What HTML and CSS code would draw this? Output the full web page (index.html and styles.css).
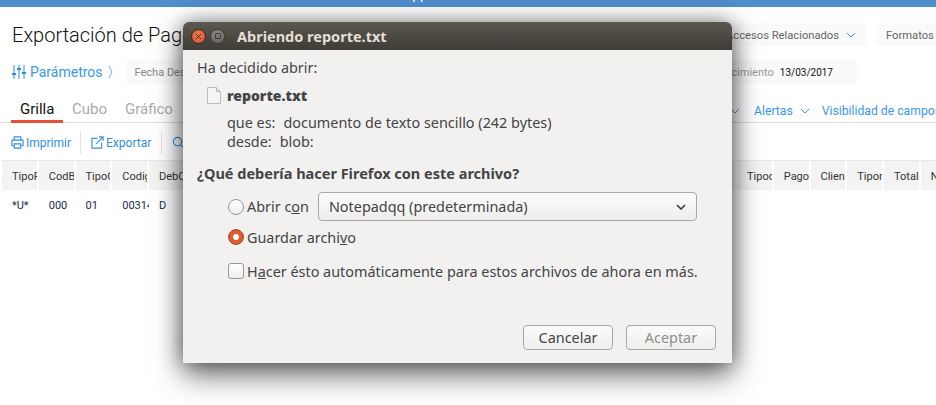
FILE: index.html
```html
<!DOCTYPE html>
<html lang="es">
<head>
<meta charset="utf-8">
<title>Exportación de Pagos</title>
<link rel="stylesheet" href="styles.css">
</head>
<body>
<div class="topbar"><span class="topbar-text">pp</span></div>
<main class="page">
  <header class="head">
    <h1 class="title">Exportación de Pagos</h1>
    <div class="head-actions">
      <span class="pill">Accesos Relacionados <svg class="chev" viewBox="0 0 10 6"><path d="M1 1l4 4 4-4"/></svg></span>
      <span class="pill pill-cut">Formatos</span>
    </div>
  </header>
  <section class="params">
    <svg class="sliders" viewBox="0 0 14 14"><path d="M2 0v14M7 0v14M12 0v14"/><path class="knob" d="M0 9h4M5 4h4M10 8h4"/></svg>
    <span class="params-link">Parámetros</span>
    <svg class="caret" viewBox="0 0 5 14"><path d="M1 1l3 6-3 6"/></svg>
    <span class="field">Fecha Desde</span>
    <span class="field field-right"><span class="field-label">Vencimiento</span><span class="field-value">13/03/2017</span></span>
  </section>
  <nav class="tabs">
    <span class="tab tab-active">Grilla</span>
    <span class="tab">Cubo</span>
    <span class="tab">Gráfico</span>
    <span class="tab-links">
      <svg class="chev chev-lone" viewBox="0 0 10 6"><path d="M1 1l4 4 4-4"/></svg>
      <span class="tab-link">Alertas <svg class="chev" viewBox="0 0 10 6"><path d="M1 1l4 4 4-4"/></svg></span>
      <span class="tab-link">Visibilidad de campos</span>
    </span>
  </nav>
  <div class="toolbar">
    <span class="tool tool-print">
      <svg class="ico" viewBox="0 0 14 14"><path d="M3.500 4V1h7v3M3.500 10.500H1V4.500h12v6h-2.500M3.500 8.500h7v4.500h-7z"/></svg>Imprimir
    </span>
    <span class="tool tool-export">
      <svg class="ico" viewBox="0 0 14 14"><path d="M7 2.500H1v10.500h10.500V7M5.500 8.500L13 1M8.500 1H13v4.500"/></svg>Exportar
    </span>
    <span class="tool tool-search">
      <svg class="ico" viewBox="0 0 14 14"><circle cx="6" cy="6" r="4.500"/><path d="M9.500 9.500L13 13"/></svg>Buscar
    </span>
  </div>
  <div class="grid grid-head">
    <span>TipoFila</span><span>CodBanco</span><span>TipoOp</span><span>Codigo</span><span>DebCred</span>
    <span>Fecha</span><span>Cuenta</span><span>Moneda</span><span>Banco</span><span>Tipo</span>
    <span>Numero</span><span>Serie</span><span>Importe</span><span>Neto</span><span>Dias</span>
    <span>Ref</span><span>Nota</span><span>Doc</span><span>Conc</span><span>Nc</span>
    <span>Tipodoc</span><span>Pago</span><span>Cliente</span><span>Tiporef</span><span>Total</span><span>Nombre</span>
  </div>
  <div class="grid grid-row">
    <span>*U*</span><span>000</span><span>01</span><span>00314</span><span>D</span>
  </div>
</main>

<div class="dialog">
  <div class="dlg-title">
    <span class="win-btn win-close"><svg viewBox="0 0 7 7"><path d="M1 1l5 5M6 1l-5 5"/></svg></span>
    <span class="win-btn win-min"><span class="win-square"></span></span>
    <span class="dlg-title-text">Abriendo reporte.txt</span>
  </div>
  <div class="dlg-body">
    <p class="line">Ha decidido abrir:</p>
    <div class="file">
      <svg class="file-ico" viewBox="0 0 14 17"><path d="M.5.500h9l4 4v12H.500z"/><path class="fold" d="M9.500.500v4h4"/></svg>
      <strong>reporte.txt</strong>
    </div>
    <p class="meta meta-first">que es:<span class="meta-v">documento de texto sencillo (242 bytes)</span></p>
    <p class="meta">desde:<span class="meta-v">blob:</span></p>
    <p class="question">¿Qué debería hacer Firefox con este archivo?</p>
    <div class="opt opt-open">
      <span class="radio"></span>
      <span class="opt-label">Abrir c<u>o</u>n</span>
      <span class="select">Notepadqq (predeterminada)<svg class="sel-chev" viewBox="0 0 10 6"><path d="M1 1l4 4 4-4"/></svg></span>
    </div>
    <div class="opt opt-save">
      <span class="radio radio-on"></span>
      <span class="opt-label">Guardar archi<u>v</u>o</span>
    </div>
    <div class="opt opt-auto">
      <span class="check"></span>
      <span class="opt-label">H<u>a</u>cer ésto automáticamente para estos archivos de ahora en más.</span>
    </div>
    <div class="buttons">
      <span class="btn">Cancelar</span>
      <span class="btn btn-off">Aceptar</span>
    </div>
  </div>
</div>
</body>
</html>
```
FILE: styles.css
```css
* { box-sizing: border-box; }
html, body { margin: 0; height: 405px; overflow: hidden; background: #fff; }
body { font-family: Roboto, "Liberation Sans", sans-serif; color: #222; }
svg { display: block; }
p { margin: 0; }

.topbar { display: flex; justify-content: center; height: 7px; overflow: hidden; background: #4f8ecb; }
.topbar-text { margin: -14px 0 0 -96px; font-size: 14px; line-height: 16px; color: #fff; }
.page { padding-top: 16px; }

.head { display: flex; justify-content: space-between; align-items: center; height: 23px; padding-left: 12px; }
.title { margin: 0; font-size: 20px; font-weight: 300; color: #111; white-space: nowrap; }
.head-actions { display: flex; gap: 10px; margin-right: -18px; }
.pill { display: flex; align-items: center; gap: 7px; height: 23px; padding: 1px 10px 0; background: #fafafa; border-radius: 4px; font-size: 11.200px; color: #666; white-space: nowrap; }
.pill-cut { width: 78px; }
.chev { width: 10px; height: 6px; fill: none; stroke: #4a90d0; stroke-width: 1; }

.params { display: flex; align-items: center; height: 24px; margin-top: 14px; padding-left: 12px; }
.sliders { width: 14px; height: 14px; fill: none; stroke: #2d8ee0; stroke-width: 1; }
.sliders .knob { stroke-width: 2; }
.params-link { margin-left: 4px; font-size: 14px; color: #3a97ee; }
.caret { width: 5px; height: 14px; margin-left: 5px; fill: none; stroke: #3a97ee; stroke-width: .8; }
.field { display: flex; align-items: center; height: 24px; margin-left: 12px; padding: 1px 0 0 10px; width: 180px; background: #fafafa; border-radius: 4px; font-size: 11px; color: #888; }
.field-right { margin-left: auto; margin-right: 79px; width: 190px; justify-content: flex-end; padding-right: 24px; }
.field-label { color: #999; font-size: 11px; }
.field-value { margin-left: 6px; color: #111; font-size: 10px; }

.tabs { display: flex; align-items: stretch; height: 29px; margin: 10px 0 0 1px; padding-left: 10px; border-bottom: 1px solid #ddd; font-size: 15px; }
.tab { padding: 6px 9px 0; color: #aaa; }
.tab-active { color: #111; border-bottom: 3px solid #e8503a; height: 29px; width: 52px; }
.tab-links { display: flex; align-items: center; gap: 12px; margin-left: auto; padding-top: 6px; font-size: 12.200px; color: #3a97ee; white-space: nowrap; margin-right: -5px; }
.tab-link { display: flex; align-items: center; gap: 7px; }
.chev-lone { margin-right: 2px; }

.toolbar { display: flex; align-items: center; height: 25px; margin-top: 7px; font-size: 12px; color: #2f8fe6; }
.tool { display: flex; align-items: center; gap: 2px; height: 23px; white-space: nowrap; }
.ico { width: 13px; height: 13px; fill: none; stroke: #2f8fe6; stroke-width: 1.200; }
.tool-print { padding: 0 9px 0 11px; border-right: 1px solid #e3e3e3; }
.tool-export { padding: 0 10px 0 10px; border-right: 1px solid #e3e3e3; }
.tool-search { padding-left: 10px; }

.grid { display: grid; grid-template-columns: repeat(26, 36.750px); margin-left: 2px; font-size: 11px; }
.grid span { overflow: hidden; white-space: nowrap; padding-left: 10px; }
.grid-head { height: 30px; margin-top: 5px; background: #f3f3f3; border-top: 1px solid #e8e8e8; color: #333; }
.grid-head span { line-height: 31px; border-right: 2px solid #fff; }
.grid-row { height: 30px; line-height: 32px; color: #1a2a50; }

.dialog { position: absolute; left: 183px; top: 22px; width: 549px; height: 341px; border-radius: 6px 6px 0 0; box-shadow: 0 0 20px rgba(0,0,0,.4), 0 12px 30px rgba(0,0,0,.55); font-family: "Noto Sans", "DejaVu Sans", sans-serif; font-size: 14.400px; color: #444; }
.dlg-title { display: flex; align-items: center; height: 28px; padding-left: 8px; border-radius: 6px 6px 0 0; background: linear-gradient(#5b584f, #3e3c36); }
.win-btn { display: flex; align-items: center; justify-content: center; width: 15px; height: 15px; border-radius: 50%; }
.win-close { background: radial-gradient(circle at 50% 35%, #ef7b4e, #d2512a); border: 1px solid #3a2a20; }
.win-close svg { width: 7px; height: 7px; fill: none; stroke: #4a2412; stroke-width: 1; }
.win-min { margin-left: 4px; background: linear-gradient(#8a877e, #6a675f); border: 1px solid #3a3934; }
.win-square { width: 6px; height: 6px; border: 1px solid #3a3934; border-radius: 1px; }
.dlg-title-text { margin-left: 12px; font-size: 14.500px; font-weight: 700; color: #e2dfd8; white-space: nowrap; }

.dlg-body { height: 313px; padding: 8px 14px 0; background: #f2f1f0; }
.line { line-height: 20px; }
.file { display: flex; align-items: center; height: 20px; margin: 7px 0 0 10px; gap: 6px; font-size: 14px; font-weight: 700; }
.file-ico { width: 14px; height: 17px; fill: #f4f4f2; stroke: #bdbcb8; stroke-width: 1; }
.file-ico .fold { fill: #dcdbd8; }
.meta { padding-left: 30px; line-height: 19px; }
.meta-first { margin-top: 8px; }
.meta-v { margin-left: 8px; }
.question { margin-top: 12px; line-height: 20px; font-size: 14.500px; font-weight: 700; }

.opt { display: flex; align-items: center; padding-left: 31px; }
.opt-label { margin-left: 3px; white-space: nowrap; }
.opt-open { height: 29px; margin-top: 9px; }
.opt-save { height: 20px; margin-top: 6px; }
.opt-auto { height: 20px; margin-top: 14px; }
.radio { width: 16px; height: 16px; border-radius: 50%; border: 1px solid #9a9894; background: linear-gradient(#fff, #eee); }
.radio-on { background: radial-gradient(circle, #fff 0 2.500px, #dd5c30 3.500px); border-color: #a8492a; }
.check { width: 16px; height: 16px; border-radius: 3px; border: 1px solid #9a9894; background: linear-gradient(#fff, #eee); }
.select { display: flex; align-items: center; justify-content: space-between; width: 379px; height: 29px; margin-left: 9px; padding: 0 10px; border: 1px solid #a9a7a3; border-radius: 4px; background: linear-gradient(#fbfbfa, #efeeed); }
.sel-chev { width: 10px; height: 6px; fill: none; stroke: #3c3c3c; stroke-width: 1.600; }

.buttons { display: flex; justify-content: flex-end; gap: 13px; margin-top: 44px; padding-right: 2px; }
.btn { display: flex; align-items: center; justify-content: center; width: 90px; height: 25px; border: 1px solid #a9a7a3; border-radius: 4px; background: linear-gradient(#fbfbfa, #efeeed); }
.btn-off { color: #8f8e8b; }
```
